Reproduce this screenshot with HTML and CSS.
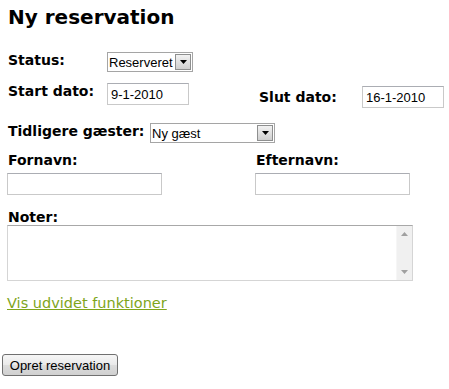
FILE: index.html
```html
<!DOCTYPE html>
<html lang="da">
<head>
  <meta charset="UTF-8">
  <title>Ny reservation</title>
  <link rel="stylesheet" href="styles.css">
</head>
<body>
  <div class="page">
    <h1>Ny reservation</h1>
    <form class="form">
      <div class="row row-status">
        <label class="label label-wide">Status:</label>
        <span class="select select-status">
          <select><option>Reserveret</option></select>
          <span class="select-btn"><svg width="7" height="4" viewBox="0 0 7 4"><path d="M0 0h7L3.5 4z" fill="#000"/></svg></span>
        </span>
      </div>
      <div class="row row-dates">
        <div class="group">
          <label class="label label-wide">Start dato:</label>
          <input class="input input-date" type="text" value="9-1-2010">
        </div>
        <div class="group group-end">
          <label class="label label-end">Slut dato:</label>
          <input class="input input-date" type="text" value="16-1-2010">
        </div>
      </div>
      <div class="row row-guests">
        <label class="label label-guests">Tidligere gæster:</label>
        <span class="select select-guests">
          <select><option>Ny gæst</option></select>
          <span class="select-btn"><svg width="7" height="4" viewBox="0 0 7 4"><path d="M0 0h7L3.5 4z" fill="#000"/></svg></span>
        </span>
      </div>
      <div class="row-names">
        <div class="field">
          <label class="label">Fornavn:</label>
          <input class="input input-name" type="text">
        </div>
        <div class="field">
          <label class="label">Efternavn:</label>
          <input class="input input-name" type="text">
        </div>
      </div>
      <div class="field field-notes">
        <label class="label">Noter:</label>
        <div class="notes">
          <textarea></textarea>
          <div class="scrollbar">
            <svg width="7" height="4" viewBox="0 0 7 4"><path d="M0 4h7L3.5 0z" fill="#a0a0a0"/></svg>
            <svg width="7" height="4" viewBox="0 0 7 4"><path d="M0 0h7L3.5 4z" fill="#a0a0a0"/></svg>
          </div>
        </div>
      </div>
      <a class="more" href="#">Vis udvidet funktioner</a>
      <button class="submit" type="button">Opret reservation</button>
    </form>
  </div>
</body>
</html>
```

FILE: styles.css
```css
:root {
  --text: #000000;
  --link: #80a51b;
  --field-border: #c9c9c9;
  --field-border-top: #abadb3;
  --select-border: #a5a5a5;
}

body {
  margin: 0;
  background: #ffffff;
  color: var(--text);
  font-family: 'DejaVu Sans', Verdana, sans-serif;
}

.page {
  padding: 5px 7px 0;
}

h1 {
  margin: 0;
  font-size: 20px;
  line-height: 24px;
  font-weight: bold;
  padding-left: 1px;
}

.row {
  display: flex;
  align-items: flex-start;
}

.label {
  display: block;
  font-size: 14px;
  line-height: 16px;
  font-weight: bold;
  padding-left: 1px;
  box-sizing: border-box;
}

.label-wide {
  width: 100px;
}

.row-status {
  margin-top: 23px;
}

.row-dates {
  margin-top: 11px;
}

.group {
  display: flex;
  align-items: flex-start;
}

.group-end {
  margin-left: 69px;
  margin-top: 3px;
}

.label-end {
  width: 104px;
  margin-top: 3px;
}

.row-guests {
  margin-top: 15px;
}

.label-guests {
  width: 143px;
}

.input {
  box-sizing: border-box;
  height: 22px;
  border: 1px solid var(--field-border);
  border-top-color: var(--field-border-top);
  padding: 0 3px;
  margin: 0;
  font-family: 'Liberation Sans', Arial, sans-serif;
  font-size: 13px;
  color: var(--text);
  background: #fff;
  outline: none;
}

.input-date {
  width: 82px;
}

.input-name {
  width: 155px;
  margin-top: 5px;
}

.select {
  display: flex;
  box-sizing: border-box;
  height: 20px;
  border: 1px solid var(--select-border);
  background: #fff;
}

.select select {
  appearance: none;
  -webkit-appearance: none;
  border: none;
  background: transparent;
  flex: 1;
  min-width: 0;
  margin: 0;
  padding: 0 0 0 1px;
  font-family: 'Liberation Sans', Arial, sans-serif;
  font-size: 13px;
  color: var(--text);
  outline: none;
}

.select-status {
  width: 86px;
}

.select-guests {
  width: 125px;
}

.select-btn {
  display: flex;
  align-items: center;
  justify-content: center;
  box-sizing: border-box;
  width: 16px;
  height: 16px;
  margin: 1px;
  border: 1px solid #8e8f8f;
  background: linear-gradient(to bottom, #f2f2f2, #cfcfcf);
}

.row-names {
  display: grid;
  grid-template-columns: 248px 1fr;
  margin-top: 9px;
}

.field {
  display: flex;
  flex-direction: column;
  align-items: flex-start;
}

.field-notes {
  margin-top: 14px;
}

.notes {
  display: flex;
  box-sizing: border-box;
  width: 406px;
  height: 56px;
  border: 1px solid #d5d5d5;
  border-top-color: #a8a8a8;
}

.notes textarea {
  flex: 1;
  border: none;
  resize: none;
  outline: none;
  margin: 0;
  padding: 2px;
  font-family: 'Liberation Sans', Arial, sans-serif;
  font-size: 13px;
}

.scrollbar {
  width: 16px;
  background: #f0f0f0;
  border-left: 1px solid #f6f6f6;
  display: flex;
  flex-direction: column;
  justify-content: space-between;
  align-items: center;
  padding: 6px 0;
  box-sizing: border-box;
}

.more {
  display: inline-block;
  margin-top: 14px;
  font-size: 14.5px;
  line-height: 17px;
  color: var(--link);
}

.submit {
  display: block;
  box-sizing: border-box;
  margin: 42px 0 0 -5px;
  width: 116px;
  height: 22px;
  padding: 0;
  border: 1px solid #707070;
  border-radius: 3px;
  background: linear-gradient(to bottom, #f6f6f6 0%, #e9e9e9 50%, #dcdcdc 51%, #d0d0d0 100%);
  font-family: 'Liberation Sans', Arial, sans-serif;
  font-size: 13px;
  color: var(--text);
}
```
